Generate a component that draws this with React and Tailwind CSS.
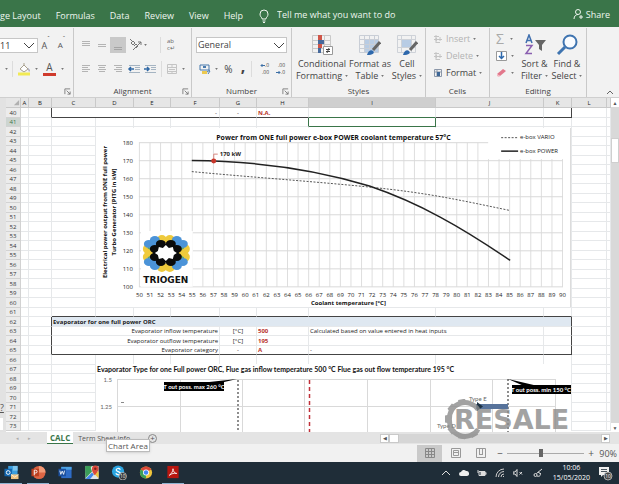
import { useState } from "react";

const tabs = ["ge Layout", "Formulas", "Data", "Review", "View", "Help"];

const columns = [
  { name: "A", width: "w-[8px]" },
  { name: "B", width: "w-[23px]" },
  { name: "C", width: "w-[44px]" },
  { name: "D", width: "w-[38px]" },
  { name: "E", width: "w-[37px]" },
  { name: "F", width: "w-[49px]" },
  { name: "G", width: "w-[37px]" },
  { name: "H", width: "w-[52px]" },
  { name: "I", width: "w-[127px]" },
  { name: "J", width: "w-[108px]" },
  { name: "K", width: "w-[28px]" },
  { name: "L", width: "w-[35px]" },
  { name: "", width: "" },
];

const evaporator = {
  63: { label: "Evaporator inflow temperature", unit: "[°C]", value: "500", note: "Calculated based on value entered in heat inputs" },
  64: { label: "Evaporator outflow temperature", unit: "[°C]", value: "195", note: "" },
  65: { label: "Evaporator category", unit: "-", value: "A", note: "-" },
};

const rows = Array.from({ length: 34 }, (_, i) => 40 + i);

function Caret() {
  return (
    <svg viewBox="0 0 4 3" className="h-[2px] w-[3px] shrink-0">
      <path d="M0 0h4L2 3z" fill="#777" />
    </svg>
  );
}

function Launcher() {
  return (
    <svg viewBox="0 0 8 8" className="h-[7px] w-[7px]" fill="none" stroke="#777" strokeWidth="1">
      <path d="M1 7V1h6M3 3l4 4M7 4v3H4" />
    </svg>
  );
}

function Group({ title, width, launcher, children }) {
  return (
    <section className={`relative flex shrink-0 flex-col border-r border-[#c9c9c9] ${width}`}>
      <div className="h-[56px]">{children}</div>
      <div className="flex flex-1 items-center justify-center text-[8px] leading-none text-[#444]">{title}</div>
      {launcher && (
        <button aria-label="More options" className="absolute right-[2px] bottom-[2px]">
          <Launcher />
        </button>
      )}
    </section>
  );
}

function AlignIcon({ lines, y }) {
  return (
    <svg viewBox="0 0 16 16" className="h-4 w-4 shrink-0" stroke="#b4b4b4" strokeWidth="1">
      {lines.map(([a, b], i) => (
        <path key={i} d={`M${a} ${y + i * 2}.5H${b}`} />
      ))}
    </svg>
  );
}

function IndentIcon({ right }) {
  return (
    <svg viewBox="0 0 16 16" className="h-4 w-4 shrink-0" fill="none">
      <path d="M3 4.500h11M9 6.500h5M9 8.500h5M3 11.500h11" stroke="#a5b4c2" />
      <path d={right ? "M2 8h5M5 6l2 2-2 2" : "M8 8H3M5 6L3 8l2 2"} stroke="#2f68a5" strokeWidth="1.500" />
    </svg>
  );
}

function FontGroup() {
  return (
    <section className="relative w-[74px] shrink-0 border-r border-[#c9c9c9]">
      <div className="flex h-[26px] items-center pt-2">
        <div className="relative h-[15px] w-[38px] border border-l-0 border-[#c6c6c6] bg-white">
          <select aria-label="Font size" className="block h-full w-full appearance-none text-[9px] leading-[13px] text-[#333]">
            <option>11</option>
          </select>
          <svg viewBox="0 0 12 8" className="pointer-events-none absolute top-[3px] right-[2px] h-[8px] w-[12px]" fill="none" stroke="#444">
            <path d="M1 1l5 5 5-5" />
          </svg>
        </div>
        <button className="flex w-[15px] justify-center text-[9px] leading-none text-[#555]">A<sup className="text-[6px]">ˆ</sup></button>
        <button className="flex w-[17px] justify-center text-[8px] leading-none text-[#555]">A<sup className="text-[6px]">ˇ</sup></button>
      </div>
      <div className="flex h-[26px] items-center pt-1 pl-[5px]">
        <Caret />
        <span className="mx-1 h-4 w-px bg-[#dcdcdc]" />
        <button aria-label="Fill colour" className="mr-1">
          <svg viewBox="0 0 14 14" className="h-[14px] w-[14px]">
            <path d="M3 7l4-4 4 4-4 3zM7 3V1" fill="#fff" stroke="#a9a18e" />
            <path d="M11 6c2 1 2 3 1 4z" fill="#88a" />
            <path d="M1 10.500h12v3H1z" fill="#f2ea54" />
          </svg>
        </button>
        <Caret />
        <button className="mx-[5px] flex h-[14px] w-[13px] items-start justify-center border-b-[3px] border-[#cf3a2c] text-[10px] leading-[11px] text-[#555]">A</button>
        <Caret />
      </div>
      <button aria-label="Font settings" className="absolute right-[2px] bottom-[2px]">
        <Launcher />
      </button>
    </section>
  );
}

function AlignmentGroup() {
  return (
    <Group title="Alignment" width="w-[118px]" launcher>
      <div className="flex h-[26px] items-center pt-2 pl-1">
        <AlignIcon y={4} lines={[[4, 12], [4, 12], [4, 12]]} />
        <AlignIcon y={7} lines={[[4, 12], [4, 12]]} />
        <span className="bg-[#c9c9c9]">
          <svg viewBox="0 0 16 16" className="h-4 w-4 shrink-0" stroke="#a4a4a4">
            <path d="M4 10.500h8M4 12.500h8" />
          </svg>
        </span>
        <svg viewBox="0 0 16 16" className="ml-[2px] h-4 w-4" fill="none" stroke="#777">
          <path d="M5 13l8-8M13 5h-3M13 5v3M3 6l2-2 2 2-2 2zM6 9l2-2 2 2-2 2M4 4L2 2" />
        </svg>
        <Caret />
        <span className="ml-[13px] h-4 w-px bg-[#dcdcdc]" />
        <span className="ml-[6px] w-3 text-[6px] leading-[7px] text-[#666]">ab c↵</span>
      </div>
      <div className="flex h-[26px] items-center pt-1 pl-1">
        <AlignIcon y={4} lines={[[4, 12], [4, 10], [4, 12], [4, 10]]} />
        <AlignIcon y={4} lines={[[4, 12], [5, 11], [4, 12], [5, 11]]} />
        <AlignIcon y={4} lines={[[4, 12], [6, 12], [4, 12], [6, 12]]} />
        <IndentIcon />
        <IndentIcon right />
        <span className="ml-[3px] h-4 w-px bg-[#dcdcdc]" />
        <svg viewBox="0 0 12 12" className="mx-1 h-3 w-3" fill="none" stroke="#c4c4c4">
          <path d="M1.500 1.500h9v9h-9zM1 4.500h10M1 8.500h10M6 1v3M6 8v3M3 6.500h6" />
        </svg>
        <Caret />
      </div>
    </Group>
  );
}

function NumberGroup() {
  return (
    <Group title="Number" width="w-[100px]" launcher>
      <div className="flex h-[26px] items-center px-1 pt-2">
        <div className="relative h-4 w-full border border-[#c6c6c6] bg-white">
          <select aria-label="Number format" className="block h-full w-full appearance-none pl-px text-[9px] leading-[14px] text-[#444]">
            <option>General</option>
          </select>
          <svg viewBox="0 0 12 8" className="pointer-events-none absolute top-[4px] right-[1px] h-[8px] w-[12px]" fill="none" stroke="#444">
            <path d="M1 1l5 5 5-5" />
          </svg>
        </div>
      </div>
      <div className="flex h-[26px] items-center gap-1 pt-1 pl-[7px] text-[#444]">
        <svg viewBox="0 0 12 12" className="h-3 w-3" fill="none">
          <path d="M1 2h9v5H1z" stroke="#4779ad" />
          <path d="M4 4h3" stroke="#4779ad" strokeWidth="2" />
          <path d="M3 8h5v3H3z" fill="#ecc94f" />
          <path d="M8 9l3-2M9 11l2-3" stroke="#4779ad" />
        </svg>
        <Caret />
        <button className="w-[13px] text-[10px] leading-none">%</button>
        <button className="w-[8px] pb-[6px] text-[16px] leading-none font-bold">,</button>
        <span className="h-4 w-px bg-[#dcdcdc]" />
        <button aria-label="Increase decimal" className="flex w-[13px] flex-col items-end text-[5px] leading-[7px]">
          <span className="flex items-center">
            <svg viewBox="0 0 5 5" className="h-[5px] w-[5px]" fill="none" stroke="#3b6ea5"><path d="M5 2.500H1M2.500 1L1 2.500 2.500 4" /></svg>.0
          </span>
          <span>.00</span>
        </button>
        <button aria-label="Decrease decimal" className="flex w-[12px] flex-col items-end text-[5px] leading-[7px]">
          <span>.00</span>
          <span className="flex items-center">
            <svg viewBox="0 0 5 5" className="h-[5px] w-[5px]" fill="none" stroke="#3b6ea5"><path d="M0 2.500h4M2.500 1L4 2.500 2.500 4" /></svg>.0
          </span>
        </button>
      </div>
    </Group>
  );
}

function BigButton({ icon, first, second, width }) {
  return (
    <button className={`flex flex-col items-center text-[9px] leading-[12px] whitespace-nowrap text-[#444] ${width}`}>
      {icon}
      <span className="mt-[2px]">{first}</span>
      <span className="flex items-center gap-[3px]">{second}<Caret /></span>
    </button>
  );
}

function StylesGroup() {
  return (
    <Group title="Styles" width="w-[134px]">
      <div className="flex justify-between pt-[6px] pr-[2px] pl-[3px]">
        <BigButton
          width="w-[54px]"
          first="Conditional"
          second="Formatting"
          icon={
            <svg viewBox="0 0 22 22" className="h-[22px] w-[22px]" fill="none">
              <path d="M1.500 1.500h18v17h-18zM1 6.500h18M1 10.500h18M1 14.500h18M13.500 1v18" stroke="#c9c9c9" />
              <path d="M7 1h4v5H7zM7 10h4v4H7z" fill="#cf5548" />
              <path d="M7 6h6v4H7zM7 14h3v5H7z" fill="#46699c" />
              <path d="M12.500 12.500h9v8h-9z" fill="#fff" stroke="#999" />
              <path d="M15 15.500h4M15 17.500h4M18 14l-2 5" stroke="#444" />
            </svg>
          }
        />
        <BigButton
          width="w-[42px]"
          first="Format as"
          second="Table"
          icon={
            <svg viewBox="0 0 22 22" className="h-[22px] w-[22px]" fill="none">
              <path d="M5 5h14v13H5z" fill="#b8cce4" />
              <path d="M.5 1.500h19v17H.5zM0 5.500h19M0 10.500h19M0 14.500h19M5.500 1v17M10.500 1v17M15.500 1v17" stroke="#c9ced6" />
              <path d="M21 8l-7 8" stroke="#666" strokeWidth="3" />
              <path d="M8 21c1-4 4-6 6-4 2 2 0 4-6 4z" fill="#2d68ac" />
            </svg>
          }
        />
        <BigButton
          width="w-[32px]"
          first="Cell"
          second="Styles"
          icon={
            <svg viewBox="0 0 22 22" className="h-[22px] w-[22px]" fill="none">
              <path d="M1.500 1.500h18v17h-18zM1 5.500h18M1 13.500h18M5.500 1v18M15.500 1v18" stroke="#ced2d8" />
              <path d="M6 6h9v7H6z" fill="#b8cce4" />
              <path d="M21 8l-7 8" stroke="#666" strokeWidth="3" />
              <path d="M7 21c1-4 4-6 6-4 2 2 0 4-6 4z" fill="#2d68ac" />
            </svg>
          }
        />
      </div>
    </Group>
  );
}

function CellsGroup() {
  const items = [
    { name: "Insert", active: false },
    { name: "Delete", active: false },
    { name: "Format", active: true },
  ];
  return (
    <Group title="Cells" width="w-[64px]">
      <div className="flex flex-col pt-[2px] pl-[7px]">
        {items.map((item) => (
          <button key={item.name} className={`flex h-[17px] items-center gap-[3px] text-[9px] leading-none ${item.active ? "text-[#444]" : "text-[#b3b3b3]"}`}>
            <svg viewBox="0 0 10 10" className="h-[10px] w-[10px]" fill="none" stroke={item.active ? "#8b97a8" : "#c4c4c4"}>
              {item.active ? (
                <>
                  <path d="M1.500 1.500h7v7h-7zM1 4h8M4 1v8" />
                  <path d="M4 4h3v4H4z" fill="#3d6797" stroke="none" />
                </>
              ) : (
                <path d="M1 2.500h5M1 5.500h8M3 8.500h4M3 1v8M7 3v4M4 4l-2 1.500 2 1.500" />
              )}
            </svg>
            {item.name}
            <Caret />
          </button>
        ))}
      </div>
    </Group>
  );
}

function EditingGroup() {
  return (
    <Group title="Editing" width="w-[97px]">
      <div className="flex pl-[6px]">
        <div className="flex w-[24px] flex-col pt-[2px]">
          <button className="flex h-[17px] items-center gap-[6px] text-[14px] leading-none text-[#aaa]">Σ<Caret /></button>
          <button aria-label="Fill" className="flex h-[17px] items-center gap-[4px]">
            <svg viewBox="0 0 11 11" className="h-[11px] w-[11px]" fill="none">
              <path d="M.5 1.500h10v9H.5z" stroke="#999" fill="#fff" />
              <path d="M5.500 2v6M3 6l2.500 2.500L8 6" stroke="#2d68ac" strokeWidth="1.500" />
            </svg>
            <Caret />
          </button>
          <button aria-label="Clear" className="flex h-[17px] items-center gap-[4px]">
            <svg viewBox="0 0 11 11" className="h-[11px] w-[11px]">
              <path d="M1 7l6-5 3 2-6 5z" fill="#e2778b" />
              <path d="M1 7l3 2-1 1-2-1z" fill="#f3b6c0" />
            </svg>
            <Caret />
          </button>
        </div>
        <div className="flex gap-[2px] pt-[6px]">
          <BigButton
            width="w-[29px]"
            first="Sort &"
            second="Filter"
            icon={
              <svg viewBox="0 0 22 22" className="h-[22px] w-[22px]" fill="none">
                <path d="M2 9l3-8 3 8M3 6.500h4" stroke="#3f6fae" strokeWidth="1.500" />
                <path d="M2 11.500h6l-6 8h6" stroke="#8a5fb0" strokeWidth="1.500" />
                <path d="M11 6h11l-4 5v6l-3-2v-4z" fill="#666" />
              </svg>
            }
          />
          <BigButton
            width="w-[32px]"
            first="Find &"
            second="Select"
            icon={
              <svg viewBox="0 0 22 22" className="h-[22px] w-[22px]" fill="none" stroke="#3f74b0">
                <circle cx="14" cy="8" r="6.500" strokeWidth="2" fill="#fafcff" />
                <path d="M9 13l-7 7" strokeWidth="3" />
              </svg>
            }
          />
        </div>
      </div>
    </Group>
  );
}

function TopBar() {
  return (
    <header className="flex h-[27px] shrink-0 items-center bg-[#3a7549] pr-[9px] pt-[4px] text-[9px] leading-none whitespace-nowrap text-[#eef5ef]">
      <nav className="flex gap-[15px]">
        {tabs.map((tab) => (
          <a key={tab} href="#">{tab}</a>
        ))}
      </nav>
      <svg viewBox="0 0 10 14" className="ml-4 h-[14px] w-[10px]" fill="none" stroke="#eef5ef">
        <path d="M3 10V9C2 8 1 7 1 5a4 4 0 018 0c0 2-1 3-2 4v1zM3.500 12h3M4 13.500h2" />
      </svg>
      <input
        aria-label="Tell me what you want to do"
        placeholder="Tell me what you want to do"
        className="ml-2 min-w-0 flex-1 pb-[3px] leading-none placeholder:text-[#eef5ef]"
      />
      <button className="flex items-center gap-[3px] pb-[3px]">
        <svg viewBox="0 0 10 10" className="h-[10px] w-[10px]" fill="none" stroke="#eef5ef">
          <circle cx="5" cy="3" r="2.500" />
          <path d="M1 10c0-3 2-4.500 4-4.500M6 8h4M8 6v4" />
        </svg>
        Share
      </button>
    </header>
  );
}

function SheetRow({ n, tall }) {
  const height = tall ? "h-[10px]" : "h-[9px]";
  const cell = `${height} border-r border-b border-[#e6e8ea] p-0 leading-[8px] whitespace-nowrap`;
  const rowHead = (
    <th className={`${height} border-r border-b border-[#d2d2d2] p-0 text-center leading-[8px] font-normal ${n === 41 ? "bg-[#cdd5d1] text-[#3a7549]" : "bg-[#ececec] text-[#333]"}`}>{n}</th>
  );
  if (n === 40) {
    return (
      <tr>
        {rowHead}
        <td className={cell} />
        <td className={`${cell} border-r-[#444]`} />
        <td colSpan={4} className={`${cell} border-b-[#444] pr-[2px] text-right`}>-</td>
        <td className={`${cell} border-b-[#444] text-center`}>-</td>
        <td className={`${cell} border-b-[#444] pl-px font-bold text-[#b8322a]`}>N.A.</td>
        <td className={`${cell} border-b-[#3a7549]`} />
        <td className={`${cell} border-b-[#444]`} />
        <td className={`${cell} border-r-[#444] border-b-[#444]`} />
        <td className={cell} />
        <td className={cell} />
      </tr>
    );
  }
  if (n === 62) {
    return (
      <tr>
        {rowHead}
        <td className={cell} />
        <td className={`${cell} border-r-[#444]`} />
        <td colSpan={9} className={`${cell} border-r-[#444] bg-[#dfe8f1] pl-px font-bold text-[#222]`}>Evaporator for one full power ORC</td>
        <td className={cell} />
        <td className={cell} />
      </tr>
    );
  }
  const data = evaporator[n];
  if (data) {
    const bottom = n === 65 ? "border-b-[#444]" : "";
    return (
      <tr>
        {rowHead}
        <td className={cell} />
        <td className={`${cell} border-r-[#444]`} />
        <td colSpan={4} className={`${cell} ${bottom} pr-px text-right`}>{data.label}</td>
        <td className={`${cell} ${bottom} text-center`}>{data.unit}</td>
        <td className={`${cell} ${bottom} pl-px font-bold text-[#b8322a]`}>{data.value}</td>
        <td colSpan={2} className={`${cell} ${bottom} pl-px`}>{data.note}</td>
        <td className={`${cell} ${bottom} border-r-[#444]`} />
        <td className={cell} />
        <td className={cell} />
      </tr>
    );
  }
  return (
    <tr>
      {rowHead}
      {columns.map((col, i) => (
        <td
          key={i}
          className={`${cell} ${n === 41 && col.name === "I" ? "border-r-[#3a7549] border-b-[#3a7549]" : ""} ${n === 41 && col.name === "H" ? "border-r-[#3a7549]" : ""} ${n === 61 && i > 1 && i < 11 ? "border-b-[#444]" : ""}`}
        />
      ))}
    </tr>
  );
}

function Logo() {
  const yellow = [[162, 240], [170, 240], [148, 249], [148, 257], [185, 249], [185, 257], [162, 267], [170, 267], [153, 253], [180, 253]];
  const blue = [[155, 240], [149, 244], [155, 245], [177, 240], [183, 244], [177, 245], [149, 262], [155, 266], [155, 261], [183, 262], [177, 266], [177, 261]];
  const black = [[161, 244], [171, 244], [155, 249], [177, 249], [155, 257], [177, 257], [161, 262], [171, 262]];
  return (
    <g>
      <path d="M141 231h52v56h-52z" fill="#fff" />
      {yellow.map(([x, y], i) => <ellipse key={i} cx={x} cy={y} rx="5" ry="5" fill="#efca3c" />)}
      {blue.map(([x, y], i) => <ellipse key={i} cx={x} cy={y} rx="5" ry="4" fill="#4b93d8" />)}
      <path d="M159 240l2 3M173 240l-2 3M148 248l4 2M184 248l-4 2M148 258l4-2M184 258l-4-2M159 266l2-3M173 266l-2-3" stroke="#57a279" strokeWidth="1.500" />
      <path d="M158 244h16l5 5v8l-5 5h-16l-5-5v-8z" fill="#0b0b0b" />
      {black.map(([x, y], i) => <ellipse key={i} cx={x} cy={y} rx="5" ry="4" fill="#0b0b0b" />)}
      <path d="M166 245l3 3 4-1 1 4 3 2-3 2-1 4-4-1-3 3-3-3-4 1-1-4-3-2 3-2 1-4 4 1z" fill="#fff" />
      <text x="166" y="283" textAnchor="middle" fontSize="9" fontWeight="bold" fill="#111" className="font-['DejaVu_Sans']">TRIOGEN</text>
    </g>
  );
}

function PowerChart() {
  const px = (t) => 139.5 + (t - 50) * 10.6;
  const py = (p) => 287 - (p - 100) * 1.806;
  const temps = Array.from({ length: 41 }, (_, i) => 50 + i);
  const powers = [100, 110, 120, 130, 140, 150, 160, 170, 180];
  return (
    <svg viewBox="96 128 475 179" className="absolute top-[30px] left-[96px] h-[179px] w-[475px] border-r border-[#dcdcdc] bg-white text-[6px]" fill="#222">
      {temps.map((t) => <path key={t} d={`M${px(t)} ${t > 82 ? 159 : 142.500}V287`} stroke="#dedede" strokeWidth="1" />)}
      {powers.map((p) => <path key={p} d={`M139 ${py(p)}H${p === 180 ? 489 : 564}`} stroke="#d9d9d9" />)}
      {powers.map((p) => <text key={p} x="133" y={py(p) + 2} textAnchor="end">{p}</text>)}
      {temps.map((t) => <text key={t} x={px(t)} y="297" textAnchor="middle">{t}</text>)}
      <text x="334" y="140" textAnchor="middle" fontSize="7" fontWeight="bold" fill="#111">Power from ONE full power e-box POWER coolant temperature 57°C</text>
      <text x="349" y="305" textAnchor="middle" fontWeight="bold" fill="#111">Coolant temperature [°C]</text>
      <text transform="translate(107 212) rotate(-90)" textAnchor="middle" fontWeight="bold" fill="#111">Electrical power output from ONE full power</text>
      <text transform="translate(116 212) rotate(-90)" textAnchor="middle" fontWeight="bold" fill="#111">Turbo Generator [PITG in kW]</text>
      <path d="M192 171.500C250 177 310 181 370 187S460 200 511 210.500" fill="none" stroke="#555" strokeDasharray="2 1.500" />
      <path d="M192 160.500C260 161 315 169 370 186C420 203 462 227 511 260.500" fill="none" stroke="#222" strokeWidth="1.500" />
      <path d="M214 161V154h4" fill="none" stroke="#d7877e" />
      <circle cx="214" cy="161" r="2.500" fill="#c8372b" />
      <text x="220" y="156" fontWeight="bold">170 kW</text>
      <path d="M502 137.500h17" stroke="#555" strokeDasharray="2 1.500" />
      <path d="M502 151h17" stroke="#222" strokeWidth="1.500" />
      <text x="521" y="139">e-box VARIO</text>
      <text x="521" y="153">e-box POWER</text>
      <Logo />
    </svg>
  );
}

function EvaporatorChart() {
  return (
    <svg viewBox="96 364 475 68" className="absolute top-[266px] left-[96px] h-[68px] w-[475px] bg-white font-[Lato] text-[6px]" fill="#666">
      <path d="M117 379.500H555M117 406.500H555M117.500 379v53M180.500 379v53M242.500 379v53M304.500 379v53M367.500 379v53M430.500 379v53M492.500 379v53M555.500 379v53" stroke="#d9d9d9" />
      <text x="97" y="372" fontSize="7" fontWeight="bold" fill="#111">Evaporator Type for one Full power ORC, Flue gas inflow temperature 500 °C Flue gas out flow temperature 195 °C</text>
      <text x="112" y="382" textAnchor="end">1.5</text>
      <text x="112" y="409" textAnchor="end">1.25</text>
      <path d="M121 402.500h3" stroke="#888" />
      <path d="M238 380v52M508 379v53" stroke="#444" strokeWidth="1.200" strokeDasharray="2 2" />
      <path d="M309.500 380v52" stroke="#c0303a" strokeWidth="1.500" strokeDasharray="4 3" />
      <path d="M200 383l37-4-17 4zM508 379l16 7h14z" fill="#000" />
      <path d="M164 382h60v9h-60zM512 385h59v9h-59z" fill="#000" />
      <text x="194" y="389" textAnchor="middle" fontWeight="bold" fill="#fff">T out poss. max 260 °C</text>
      <text x="541" y="392" textAnchor="middle" fontWeight="bold" fill="#fff">T out poss. min 150 °C</text>
      <path d="M476 404h32v5h-32z" fill="#57739b" />
      <path d="M477 402l6 4.500-6 4.500z" fill="#1d3142" />
      <text x="469" y="401">Type E</text>
      <text x="437" y="428">Type D</text>
    </svg>
  );
}

function Watermark() {
  const teeth = [-10, -50, -90, -130, -170, -210];
  return (
    <div className="pointer-events-none absolute top-[301px] left-[445px] z-10 flex items-center opacity-80">
      <svg viewBox="0 0 42 42" className="h-[41px] w-[41px]" fill="none">
        <path d="M34 11A16 16 0 004.600 21 16 16 0 0034 31" stroke="#8c8c8c" strokeWidth="5" />
        {teeth.map((t) => (
          <path key={t} d="M17 0h7l1 5h-9z" fill="#8c8c8c" transform={`rotate(${t} 20.500 20.500)`} />
        ))}
      </svg>
      <span className="-ml-[32px] font-['DejaVu_Sans'] text-[27px] leading-none font-bold text-[#8c8c8c]">RESALE</span>
    </div>
  );
}

function Sheet() {
  return (
    <main className="relative flex min-h-0 flex-1 bg-white">
      <div className="flex w-[6px] shrink-0 flex-col justify-end bg-[#e2e2e2] pb-[2px] text-[9px] leading-[12px] text-[#555]">
        <span className="underline">?</span>
        <span className="mt-1 h-[12px] w-[3px] bg-white" />
      </div>
      <div className="min-w-0 flex-1 overflow-hidden">
        <table className="w-full table-fixed border-separate border-spacing-0 text-[6px] text-[#222]">
          <colgroup>
            <col className="w-[15px]" />
            {columns.map((col, i) => <col key={i} className={col.width} />)}
          </colgroup>
          <thead>
            <tr>
              <th className="h-[10px] border-r border-b border-[#c9c9c9] bg-[#e6e6e6] p-0">
                <svg viewBox="0 0 8 8" className="ml-auto h-[7px] w-[7px]"><path d="M7 1v6H1z" fill="#b0b0b0" /></svg>
              </th>
              {columns.map((col, i) => (
                <th key={i} className={`h-[10px] border-r border-b border-[#c9c9c9] p-0 text-center leading-[8px] font-normal ${col.name === "I" ? "bg-[#cfcfcf]" : "bg-[#e6e6e6]"}`}>{col.name}</th>
              ))}
            </tr>
          </thead>
          <tbody>
            {rows.map((n, i) => <SheetRow key={n} n={n} tall={i % 2 === 0} />)}
          </tbody>
        </table>
      </div>
      <div className="flex w-[8px] shrink-0 flex-col items-center bg-[#d9d9d9] text-[5px] leading-[8px] text-[#555]">
        <button aria-label="Scroll up" className="h-[9px] w-full bg-white">▲</button>
        <span className="mt-[31px] h-[25px] w-full border border-[#cfcfcf] bg-white" />
        <button aria-label="Scroll down" className="mt-auto h-[9px] w-full bg-white">▼</button>
      </div>
      <PowerChart />
      <EvaporatorChart />
      <Watermark />
    </main>
  );
}

function SheetTabs() {
  return (
    <div className="relative flex h-[12px] shrink-0 items-center bg-[#e4e4e4] pr-[9px] text-[8px] leading-none whitespace-nowrap text-[#555]">
      <div className="flex w-[47px] gap-[9px] pl-4 text-[5px] text-[#aaa]">
        <span>◂</span>
        <span>▸</span>
      </div>
      <button className="h-full border-b border-[#3a7549] bg-white px-[3px] font-bold text-[#3a7549]">CALC</button>
      <button className="ml-[5px] text-[7px]">Term Sheet info</button>
      <button aria-label="New sheet" className="ml-[18px] flex h-[9px] w-[9px] items-center justify-center rounded-full border border-[#888] text-[8px] leading-none">+</button>
      <div className="ml-auto flex h-[9px] w-[230px] bg-[#d6d6d6] text-[5px]">
        <button aria-label="Scroll left" className="w-[9px] border border-[#c9c9c9] bg-white">◀</button>
        <span className="w-[10px] border border-[#c9c9c9] bg-white" />
        <button aria-label="Scroll right" className="ml-auto w-[9px] border border-[#c9c9c9] bg-white">▶</button>
      </div>
      <div role="tooltip" className="absolute top-[7px] left-[106px] z-10 border border-[#bbb] bg-white px-px text-[8px] leading-[11px] text-[#555] shadow">Chart Area</div>
    </div>
  );
}

function StatusBar() {
  const [zoom, setZoom] = useState(90);
  return (
    <div className="flex h-[18px] shrink-0 items-center justify-end bg-[#f1f1f1] pr-[2px] text-[9px] leading-none text-[#555]">
      <button aria-label="Normal view" className="flex h-[17px] w-[25px] items-center justify-center bg-[#cacaca]">
        <svg viewBox="0 0 10 10" className="h-[10px] w-[10px]" fill="none" stroke="#888"><path d="M.5.5h9v9h-9zM0 3.500h10M0 6.500h10M3.500 0v10M6.500 0v10" /></svg>
      </button>
      <button aria-label="Page layout view" className="flex w-[27px] justify-center">
        <svg viewBox="0 0 10 10" className="h-[10px] w-[10px]" fill="none" stroke="#999"><path d="M.5.5h9v9h-9zM2.500 2.500h5v5h-5zM3 4.500h4" /></svg>
      </button>
      <button aria-label="Page break view" className="flex w-[24px] justify-center">
        <svg viewBox="0 0 10 10" className="h-[10px] w-[10px]" fill="none" stroke="#999"><path d="M.5.5h9v9h-9zM3.500 0v6M6.500 0v6M3 6.500h4" /></svg>
      </button>
      <button aria-label="Zoom out" className="w-[14px] text-[10px]" onClick={() => setZoom(zoom - 10)}>−</button>
      <input
        type="range"
        aria-label="Zoom"
        min="10"
        max="190"
        value={zoom}
        onChange={(e) => setZoom(Number(e.target.value))}
        className="h-px w-[77px] appearance-none bg-[#aaa] [&::-webkit-slider-thumb]:h-[8px] [&::-webkit-slider-thumb]:w-[4px] [&::-webkit-slider-thumb]:appearance-none [&::-webkit-slider-thumb]:bg-[#666]"
      />
      <button aria-label="Zoom in" className="w-[14px] text-[10px]" onClick={() => setZoom(zoom + 10)}>+</button>
      <span className="w-[19px] text-right whitespace-nowrap">{zoom}%</span>
    </div>
  );
}

function TaskApp({ label, active, children }) {
  return (
    <button aria-label={label} className={`flex h-full w-[22px] items-center justify-center border-b ${active ? "border-[#8fb3d1]" : "border-transparent"}`}>
      <svg viewBox="0 0 16 16" className="h-[15px] w-[16px]">{children}</svg>
    </button>
  );
}

function Taskbar() {
  return (
    <footer className="flex h-[22px] shrink-0 items-center justify-between bg-[#1f2d38] pr-[6px] text-white">
      <div className="flex h-full gap-[5px]">
        <TaskApp label="Outlook" active>
          <path d="M5 1h10v11H5z" fill="#3b9ddd" />
          <path d="M10 1h5v5h-5z" fill="#7cc5ee" />
          <path d="M1 4h8v8H1z" fill="#1366ae" />
          <circle cx="5" cy="8" r="2" fill="none" stroke="#fff" />
          <path d="M8 10h8v5H8z" fill="#efc27e" />
          <path d="M8 10l4 3 4-3" fill="none" stroke="#fff" strokeWidth=".7" />
        </TaskApp>
        <TaskApp label="PowerPoint" active>
          <circle cx="9" cy="8" r="7" fill="#dd6544" />
          <path d="M9 1a7 7 0 017 7H9z" fill="#f29a77" />
          <path d="M1 4h8v8H1z" fill="#bb3f1f" />
          <path d="M4 11V5.500h1.500a1.500 1.500 0 010 3H4" fill="none" stroke="#fff" />
        </TaskApp>
        <TaskApp label="Word">
          <path d="M4 2h11v12H4z" fill="#2e6cc7" />
          <path d="M4 2h11v3H4z" fill="#4da4e6" />
          <path d="M1 4h8v8H1z" fill="#1a4f9f" />
          <path d="M2.500 6l1 4L5 6.500 6.500 10l1-4" fill="none" stroke="#fff" strokeWidth=".9" />
        </TaskApp>
        <TaskApp label="Maps">
          <path d="M1 1h14v14H1z" fill="#e6e5df" />
          <path d="M1 1h7L1 9z" fill="#3b9d58" />
          <path d="M1 1h5l2 6-7 7z" fill="#3b9d58" />
          <path d="M3 15l5-6 6 6z" fill="#dfe4ea" />
          <path d="M9 8l6 6V7z" fill="#f1c33c" />
          <path d="M1 15l7-7 2 2-4 5z" fill="#4187e8" />
          <path d="M11 11C8 7 8 6 8 4a3.500 3.500 0 017 0c0 2-1 3-4 7z" fill="#d94a3c" />
          <circle cx="11.500" cy="4" r="1.300" fill="#7d211a" />
        </TaskApp>
        <TaskApp label="Skype">
          <circle cx="7" cy="7" r="6.500" fill="#2ba5e2" />
          <path d="M9.500 5C8 3 5 3.500 5 5.300S9.500 7 9.500 9 6 11 4.500 9" fill="none" stroke="#fff" strokeWidth="1.300" />
          <circle cx="12" cy="12" r="4" fill="#333" stroke="#ddd" strokeWidth=".7" />
          <text x="12" y="14" textAnchor="middle" fontSize="5" fill="#fff">10</text>
        </TaskApp>
        <TaskApp label="Chrome">
          <circle cx="8" cy="8" r="6.500" fill="#f0c53b" />
          <path d="M8 8L2.400 4.800A6.500 6.500 0 0113.600 4.800z" fill="#da4838" />
          <path d="M8 8L2.400 4.800A6.500 6.500 0 008 14.500z" fill="#3c9f58" />
          <circle cx="8" cy="8" r="3.200" fill="#fff" />
          <circle cx="8" cy="8" r="2.400" fill="#4285f4" />
        </TaskApp>
        <TaskApp label="Acrobat" active>
          <path d="M2 1h12v13H2z" fill="#b8160f" />
          <path d="M4 11c3-2 4-5 4-7 0 3 2 5 4 5-3-.5-5 0-8 2z" fill="none" stroke="#fff" strokeWidth=".9" />
        </TaskApp>
      </div>
      <div className="flex items-center gap-2">
        <svg viewBox="0 0 10 10" className="h-[10px] w-[10px]" fill="none" stroke="#ddd"><path d="M1 7l4-4 4 4" /></svg>
        <svg viewBox="0 0 10 10" className="h-[10px] w-[10px]"><path d="M2 8a2 2 0 010-4 3 3 0 015-1 2.500 2.500 0 011 5z" fill="#eee" /></svg>
        <svg viewBox="0 0 10 10" className="h-[10px] w-[10px]" fill="none" stroke="#ddd"><path d="M2 3.500h6v4H2zM9 4.500v2M1 2v3" /><path d="M4 4h4v3H4z" fill="#ddd" /></svg>
        <svg viewBox="0 0 10 10" className="h-[10px] w-[10px]" fill="none" stroke="#ccc"><path d="M1 9a8 8 0 018-8M3.500 9A5.500 5.500 0 019 3.500M6 9a3 3 0 013-3M8.500 8v1" /></svg>
        <svg viewBox="0 0 10 10" className="h-[10px] w-[10px]" fill="none" stroke="#ddd"><path d="M0 4h2l2-2.500v7L2 6H0zM6.500 4l2.500 2.500M9 4L6.500 6.500" /></svg>
        <svg viewBox="0 0 10 10" className="ml-[2px] h-[10px] w-[10px]" fill="none" stroke="#ddd"><path d="M1 7a1.500 1.500 0 103 0 1.500 1.500 0 10-3 0M3.500 5.500L9 1M4 8c3 1 4-1 3-3M5 4l3 2" /></svg>
        <div className="ml-[2px] flex flex-col items-center text-[7px] leading-[10px]">
          <span>10:06</span>
          <span>15/05/2020</span>
        </div>
        <button aria-label="Notifications">
          <svg viewBox="0 0 15 15" className="h-[15px] w-[15px]">
            <path d="M1 1h10v8H5l-2 2V9H1z" fill="#eee" />
            <path d="M3 3.500h6M3 5.500h6" stroke="#1f2d38" strokeWidth=".8" />
            <circle cx="10" cy="10" r="4" fill="#444" stroke="#ddd" strokeWidth=".7" />
            <text x="10" y="12" textAnchor="middle" fontSize="5" fill="#fff">10</text>
          </svg>
        </button>
      </div>
    </footer>
  );
}

export default function App() {
  return (
    <div className="flex h-screen flex-col overflow-hidden bg-[#f1f1f1] font-['Open_Sans',sans-serif]">
      <TopBar />
      <div className="flex h-[71px] shrink-0 border-b border-[#cfcfcf] bg-[#f2f2f2] pt-px">
        <FontGroup />
        <AlignmentGroup />
        <NumberGroup />
        <StylesGroup />
        <CellsGroup />
        <EditingGroup />
        <button aria-label="Collapse ribbon" className="mt-auto mr-[5px] mb-[2px] ml-auto">
          <svg viewBox="0 0 8 6" className="h-[6px] w-[8px]" fill="none" stroke="#666"><path d="M1 5l3-3 3 3" /></svg>
        </button>
      </div>
      <Sheet />
      <SheetTabs />
      <StatusBar />
      <Taskbar />
    </div>
  );
}
